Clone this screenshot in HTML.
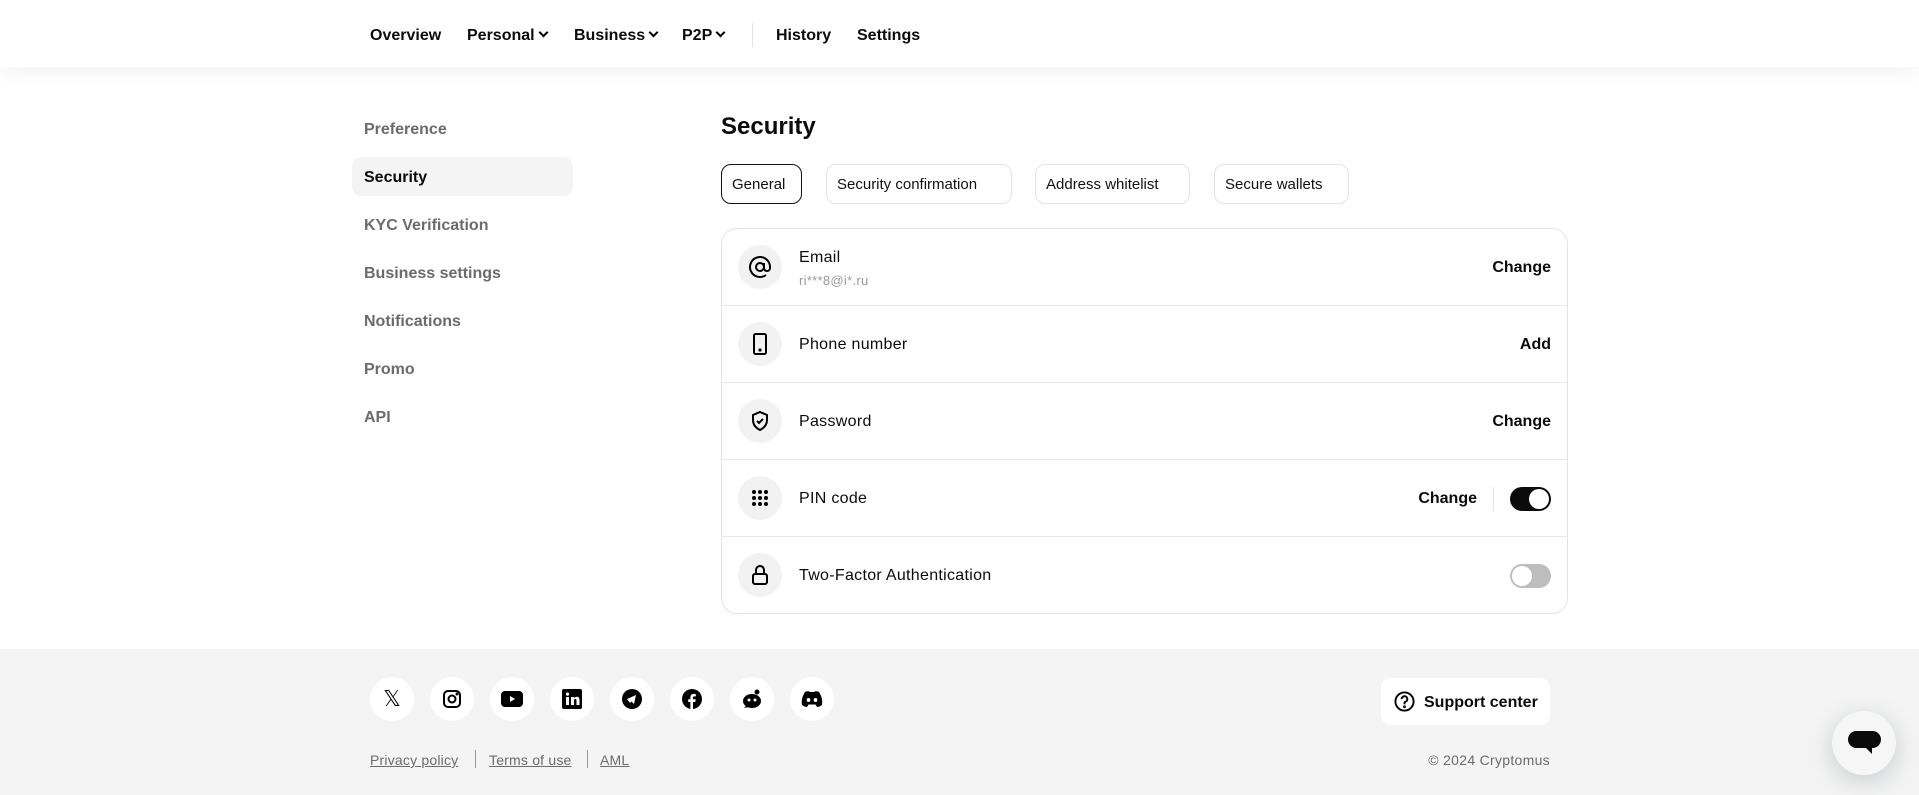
<!DOCTYPE html>
<html><head><meta charset="utf-8"><style>
*{box-sizing:border-box;margin:0;padding:0}
body{width:1919px;height:795px;overflow:hidden;background:#fff;font-family:"Liberation Sans",sans-serif;color:#0b0b0b;position:relative}
.a{position:absolute}
.nav{position:absolute;left:0;top:0;width:1919px;height:67px;background:#fff;box-shadow:0 4px 20px rgba(0,0,0,.06);z-index:2}
.nav span{position:absolute;top:27px;font-size:16px;font-weight:bold}
.chev{display:inline-block;width:7px;height:7px;border-right:2px solid #000;border-bottom:2px solid #000;transform:rotate(45deg);margin-left:5px;position:relative;top:-4px}
.side{position:absolute;left:364px;font-size:16px;color:#6b6b6b;font-weight:bold}
.tab{position:absolute;top:164px;height:40px;border:1px solid #e3e3e3;border-radius:10px;font-size:15px;line-height:40px;padding:0 10px;color:#111}
.card{position:absolute;left:721px;top:228px;width:847px;height:386px;border:1px solid #e3e3e3;border-radius:16px}
.row{position:absolute;left:0;width:845px;height:77px;border-bottom:1px solid #e8e8e8}
.ic{position:absolute;left:16px;top:16px;width:44px;height:44px;border-radius:50%;background:#f2f2f2;display:flex;align-items:center;justify-content:center}
.lbl{position:absolute;left:77px;top:30px;font-size:16px;letter-spacing:.3px}
.act{position:absolute;right:16px;top:30px;font-size:16px;font-weight:bold}
.tg{position:absolute;right:16px;top:27px;width:41px;height:24px;border-radius:12px}
.tg i{position:absolute;top:2px;width:20px;height:20px;border-radius:50%;background:#fff}
.foot{position:absolute;left:0;top:649px;width:1919px;height:146px;background:#f4f4f4}
.soc{position:absolute;top:677px;width:44px;height:44px;border-radius:50%;background:#fff;display:flex;align-items:center;justify-content:center}
.lk{position:absolute;top:752px;font-size:14px;color:#6b6b6b;text-decoration:underline;letter-spacing:.2px}
</style></head><body>
<div class="nav">
<span style="left:370px">Overview</span>
<span style="left:467px">Personal<i class="chev"></i></span>
<span style="left:574px">Business<i class="chev"></i></span>
<span style="left:682px">P2P<i class="chev"></i></span>
<div class="a" style="left:752px;top:23px;width:1px;height:24px;background:#e3e3e3"></div>
<span style="left:776px">History</span>
<span style="left:857px">Settings</span>
</div>

<div class="a" style="left:352px;top:157px;width:221px;height:39px;background:#f4f4f4;border-radius:10px"></div>
<div class="side" style="top:121px">Preference</div>
<div class="side" style="top:169px;color:#0b0b0b">Security</div>
<div class="side" style="top:217px">KYC Verification</div>
<div class="side" style="top:265px">Business settings</div>
<div class="side" style="top:313px">Notifications</div>
<div class="side" style="top:361px">Promo</div>
<div class="side" style="top:409px">API</div>

<div class="a" style="left:721px;top:113px;font-size:24px;font-weight:bold">Security</div>
<div class="tab" style="left:721px;width:81px;border-color:#111">General</div>
<div class="tab" style="left:826px;width:186px">Security confirmation</div>
<div class="tab" style="left:1035px;width:155px">Address whitelist</div>
<div class="tab" style="left:1214px;width:135px">Secure wallets</div>

<div class="card">
<div class="row" style="top:0">
<div class="ic"><svg width="24" height="24" viewBox="0 0 24 24" fill="none" stroke="#000" stroke-width="2"><circle cx="12" cy="12" r="4"/><path d="M16 8v5a3 3 0 0 0 6 0v-1a10 10 0 1 0-4 8"/></svg></div>
<div class="lbl" style="top:20px">Email</div>
<div class="a" style="left:77px;top:44px;font-size:13px;color:#9a9a9a;letter-spacing:.3px">ri***8@i*.ru</div>
<div class="act">Change</div></div>
<div class="row" style="top:77px">
<div class="ic"><svg width="24" height="24" viewBox="0 0 24 24" fill="none" stroke="#000" stroke-width="2"><rect x="6" y="2" width="12" height="20" rx="1.5"/><circle cx="12" cy="18" r=".6" fill="#000"/></svg></div>
<div class="lbl">Phone number</div><div class="act">Add</div></div>
<div class="row" style="top:154px">
<div class="ic"><svg width="24" height="24" viewBox="0 0 24 24" fill="none" stroke="#000" stroke-width="2"><path d="M12 3l7 3v5c0 5-3 8-7 10-4-2-7-5-7-10V6z"/><path d="M9 12l2 2 4-4"/></svg></div>
<div class="lbl">Password</div><div class="act">Change</div></div>
<div class="row" style="top:231px">
<div class="ic"><svg width="20" height="20" viewBox="0 0 20 20" fill="#000"><circle cx="4" cy="4" r="2"/><circle cx="10" cy="4" r="2"/><circle cx="16" cy="4" r="2"/><circle cx="4" cy="10" r="2"/><circle cx="10" cy="10" r="2"/><circle cx="16" cy="10" r="2"/><circle cx="4" cy="16" r="2"/><circle cx="10" cy="16" r="2"/><circle cx="16" cy="16" r="2"/></svg></div>
<div class="lbl">PIN code</div><div class="act" style="right:90px">Change</div>
<div class="a" style="right:73px;top:27px;width:1px;height:24px;background:#e3e3e3"></div>
<div class="tg" style="background:#0b0b0b"><i style="right:2px"></i></div></div>
<div class="row" style="top:308px;border-bottom:none">
<div class="ic"><svg width="24" height="24" viewBox="0 0 24 24" fill="none" stroke="#000" stroke-width="2"><rect x="5" y="11" width="14" height="10" rx="2"/><path d="M8 11V7a4 4 0 0 1 8 0v4"/></svg></div>
<div class="lbl">Two-Factor Authentication</div>
<div class="tg" style="background:#bdbdbd"><i style="left:2px"></i></div></div>
</div>

<div class="foot"></div>
<div class="soc" style="left:370px"><span style="font-size:22px">𝕏</span></div>
<div class="soc" style="left:430px"><svg width="20" height="20" viewBox="0 0 20 20" fill="none" stroke="#000" stroke-width="2"><rect x="2" y="2" width="16" height="16" rx="4"/><circle cx="10" cy="10" r="3.5"/><circle cx="15" cy="5" r=".5" fill="#000"/></svg></div>
<div class="soc" style="left:490px"><svg width="22" height="16" viewBox="0 0 22 16"><rect width="22" height="16" rx="4"/><path d="M9 5v6l5-3z" fill="#fff"/></svg></div>
<div class="soc" style="left:550px"><svg width="20" height="20" viewBox="0 0 20 20"><rect width="20" height="20" rx="2"/><path d="M4 8h3v8H4zM5.5 3.5a1.6 1.6 0 1 1 0 3.2 1.6 1.6 0 0 1 0-3.2zM9 8h3v1.2c.6-1 1.6-1.4 2.8-1.4 2 0 2.7 1.3 2.7 3.4V16h-3v-4.3c0-1-.2-1.7-1.2-1.7S12 10.7 12 11.7V16H9z" fill="#fff"/></svg></div>
<div class="soc" style="left:610px"><svg width="20" height="20" viewBox="0 0 20 20"><circle cx="10" cy="10" r="10"/><path d="M5 10l9-4-2 9-2.5-2.5L8 14z" fill="#fff"/></svg></div>
<div class="soc" style="left:670px"><svg width="20" height="20" viewBox="0 0 20 20"><circle cx="10" cy="10" r="10"/><path d="M11 20v-7h2.3l.4-2.7H11V8.7c0-.8.3-1.3 1.4-1.3h1.4V5c-.3 0-1.1-.1-2-.1-2 0-3.4 1.2-3.4 3.4v2H6.2V13h2.2v7z" fill="#fff"/></svg></div>
<div class="soc" style="left:730px"><svg width="20" height="22" viewBox="0 0 20 22"><ellipse cx="10" cy="13" rx="9" ry="7"/><circle cx="15" cy="4" r="2.5"/><circle cx="7" cy="12" r="1.5" fill="#fff"/><circle cx="13" cy="12" r="1.5" fill="#fff"/><path d="M2 20l3-3 2 2z"/></svg></div>
<div class="soc" style="left:790px"><svg width="22" height="16" viewBox="0 0 22 16"><path d="M4 1c2-1 4-1 5 0h4c1-1 3-1 5 0 2 3 4 8 3 13-2 1.5-4 2-5 2l-1.5-2.5h-7L6 16c-1 0-3-.5-5-2C0 9 2 4 4 1z"/><ellipse cx="7.5" cy="9" rx="1.8" ry="2" fill="#fff"/><ellipse cx="14.5" cy="9" rx="1.8" ry="2" fill="#fff"/></svg></div>

<div class="a" style="left:1381px;top:678px;width:169px;height:47px;background:#fff;border-radius:10px"></div>
<svg class="a" style="left:1394px;top:691px" width="21" height="21" viewBox="0 0 22 22" fill="none" stroke="#000" stroke-width="2"><circle cx="11" cy="11" r="9.5"/><path d="M8 8.5a3 3 0 1 1 4 2.8c-.7.3-1 .8-1 1.6V14"/><circle cx="11" cy="16.5" r=".5" fill="#000"/></svg>
<div class="a" style="left:1424px;top:694px;font-size:16px;font-weight:bold">Support center</div>

<div class="lk" style="left:370px">Privacy policy</div>
<div class="a" style="left:475px;top:750px;width:1px;height:18px;background:#999"></div>
<div class="lk" style="left:489px">Terms of use</div>
<div class="a" style="left:587px;top:750px;width:1px;height:18px;background:#999"></div>
<div class="lk" style="left:600px">AML</div>
<div class="a" style="right:369px;top:752px;font-size:14px;color:#6b6b6b;letter-spacing:.3px">© 2024 Cryptomus</div>

<div class="a" style="left:1832px;top:711px;width:64px;height:64px;border-radius:50%;background:#f6f6f6;box-shadow:0 6px 24px rgba(60,90,90,.25)"></div>
<div class="a" style="left:1848px;top:731px;width:33px;height:17px;border-radius:9px;background:#0b0b0b"></div>
<div class="a" style="left:1866px;top:748px;width:0;height:0;border-left:6px solid transparent;border-top:6px solid #0b0b0b"></div>
</body></html>
